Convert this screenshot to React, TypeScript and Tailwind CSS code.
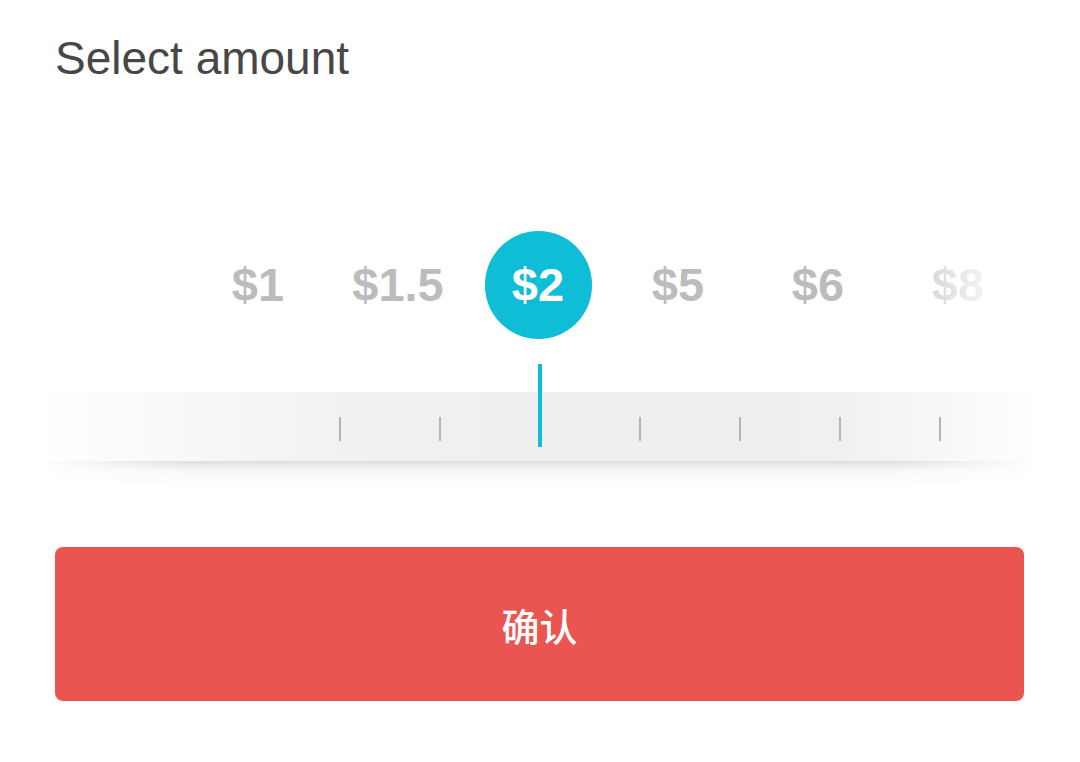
import React from "react";

const amounts = [
  { label: "$1", active: false, fade: false },
  { label: "$1.5", active: false, fade: false },
  { label: "$2", active: true, fade: false },
  { label: "$5", active: false, fade: false },
  { label: "$6", active: false, fade: false },
  { label: "$8", active: false, fade: true },
];

const ticks = [0, 1, 2, 3, 4, 5, 6];

export default function App() {
  return (
    <div className="w-[1080px] h-[762px] bg-white overflow-hidden font-['Liberation_Sans',Arial,sans-serif]">
      <h1 className="ml-[55px] mt-[35px] text-[46px] leading-[46px] font-normal text-[#474747]">
        Select amount
      </h1>

      <div className="mt-[150px] flex pl-[188px]">
        {amounts.map((a) => (
          <div key={a.label} className="w-[140px] h-[108px] flex items-center justify-center">
            {a.active ? (
              <div className="w-[107px] h-[108px] rounded-full bg-[#0fbdd6] flex items-center justify-center text-white text-[47px] leading-[46px] font-bold">
                {a.label}
              </div>
            ) : a.fade ? (
              <span className="text-[47px] leading-[46px] font-bold bg-linear-to-r from-[#dadada] to-[#f3f3f3] bg-clip-text text-transparent">
                {a.label}
              </span>
            ) : (
              <span className="text-[47px] leading-[46px] font-bold text-[#bcbcbc]">{a.label}</span>
            )}
          </div>
        ))}
      </div>

      <div className="relative mt-[53px] mx-[40px]">
        <div className="h-[69px] bg-[linear-gradient(to_right,rgba(239,239,239,0)_0%,#f1f1f1_30%,#eeeeee_60%,#f0f0f0_80%,rgba(239,239,239,0)_100%)] flex pl-[250px] pt-[25px]">
          {ticks.map((t) => (
            <div key={t} className="w-[100px] flex justify-center">
              {t !== 2 && <div className="w-[2px] h-[24px] bg-[#b4b4b4]" />}
            </div>
          ))}
        </div>
        <div className="h-[24px] bg-[linear-gradient(to_bottom,rgba(0,0,0,0.13),rgba(0,0,0,0.03)_40%,rgba(0,0,0,0))] [mask-image:linear-gradient(to_right,transparent,black_15%,black_85%,transparent)]" />
        <div className="absolute left-[498px] top-[-28px] w-[4px] h-[83px] bg-[#0fbdd6]" />
      </div>

      <button className="mt-[62px] ml-[55px] w-[969px] h-[154px] rounded-[8px] bg-[#eb5551] text-white text-[38px] font-medium font-['Noto_Sans_CJK_SC',sans-serif] flex items-center justify-center">
        确认
      </button>
    </div>
  );
}
